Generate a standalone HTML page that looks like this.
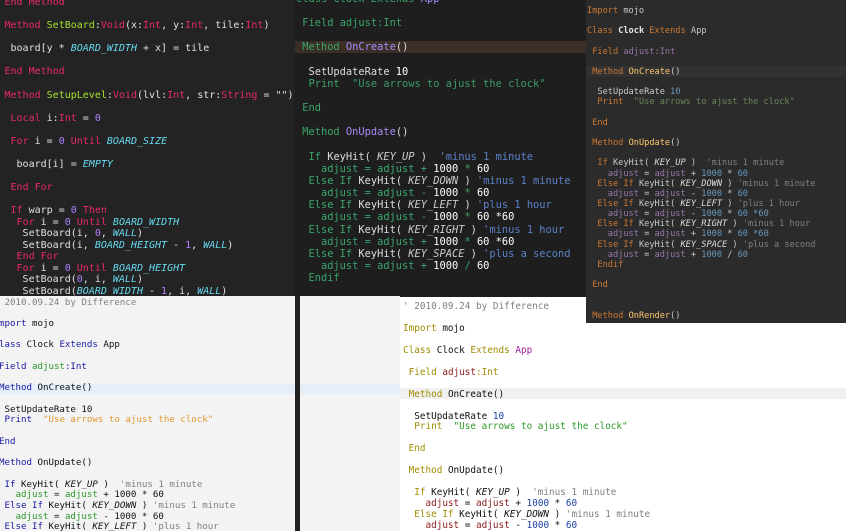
<!DOCTYPE html>
<html><head><meta charset="utf-8"><style>
*{margin:0;padding:0;box-sizing:border-box}
body{width:846px;height:531px;overflow:hidden;position:relative;background:#1e1e1e}
.p{position:absolute;overflow:hidden}
pre{position:absolute;font-family:"DejaVu Sans Mono","Liberation Mono",monospace;white-space:pre}
i{font-style:italic}
#A{left:0;top:0;width:295px;height:296px;background:#232323}
#A pre{left:4.5px;top:-2.8px;font-size:10px;line-height:11.55px;color:#e0e0e0}
#A .k{color:#e8286b}#A .f{color:#a6e22e}#A .c{color:#66d9ef;font-style:italic}#A .n{color:#ae81ff}
#B{left:295px;top:0;width:295px;height:296px;background:#1e1e1e}
#B pre{left:1px;top:-7.4px;font-size:10.37px;line-height:12.15px;color:#ddd}
#B .k{color:#3aa56a}#B .v{color:#3aa56a}#B .f{color:#a78bfa}#B .s{color:#3a9a6a}#B .c{color:#5b82c9}#B .n{color:#fff}#B .o{color:#3aa56a}#B .i{color:#ccc;font-style:italic}
#C{left:586px;top:0;width:260px;height:323px;background:#2b2b2b}
#C pre{left:1px;top:6px;font-size:8.65px;line-height:10.15px;color:#c8c8c8}
#C .k{color:#cc7832}#C .b{color:#e6e6e6;font-weight:bold}#C .v{color:#9876aa}#C .f{color:#ffc66d}#C .s{color:#6a8759}#C .c{color:#808080}#C .n{color:#6897bb}#C .i{font-style:italic;color:#ddd}
#D{left:0;top:296px;width:400px;height:235px;background:#f3f3f3}
#D pre{left:-6.5px;top:1.6px;font-size:9.14px;line-height:10.7px;color:#111}
#D .k{color:#1a1aa6}#D .v{color:#2a9a2a}#D .s{color:#e09a30}#D .c{color:#808080}#D .i{font-style:italic}
#E{left:400px;top:297px;width:446px;height:234px;background:#fff}
#E pre{left:3px;top:5px;font-size:9.33px;line-height:10.95px;color:#111}
#E .k{color:#a08c00}#E .a{color:#a0209f}#E .v{color:#8b1a1a}#E .s{color:#2a9a2a}#E .c{color:#808080}#E .n{color:#1a3fa0}#E .i{font-style:italic}
</style></head><body>

<div class="p" id="A"><pre><span class="k">End Method</span>

<span class="k">Method</span> <span class="f">SetBoard</span>:<span class="k">Void</span>(x:<span class="k">Int</span>, y:<span class="k">Int</span>, tile:<span class="k">Int</span>)

 board[y * <span class="c">BOARD_WIDTH</span> + x] = tile

<span class="k">End Method</span>

<span class="k">Method</span> <span class="f">SetupLevel</span>:<span class="k">Void</span>(lvl:<span class="k">Int</span>, str:<span class="k">String</span> = "")

 <span class="k">Local</span> i:<span class="k">Int</span> = <span class="n">0</span>

 <span class="k">For</span> i = <span class="n">0</span> <span class="k">Until</span> <span class="c">BOARD_SIZE</span>

  board[i] = <span class="c">EMPTY</span>

 <span class="k">End For</span>

 <span class="k">If</span> warp = <span class="n">0</span> <span class="k">Then</span>
  <span class="k">For</span> i = <span class="n">0</span> <span class="k">Until</span> <span class="c">BOARD_WIDTH</span>
   SetBoard(i, <span class="n">0</span>, <span class="c">WALL</span>)
   SetBoard(i, <span class="c">BOARD_HEIGHT</span> - <span class="n">1</span>, <span class="c">WALL</span>)
  <span class="k">End For</span>
  <span class="k">For</span> i = <span class="n">0</span> <span class="k">Until</span> <span class="c">BOARD_HEIGHT</span>
   SetBoard(<span class="n">0</span>, i, <span class="c">WALL</span>)
   SetBoard(<span class="c">BOARD_WIDTH</span> - <span class="n">1</span>, i, <span class="c">WALL</span>)</pre></div>

<div class="p" id="B"><div style="position:absolute;left:0;top:41px;width:295px;height:12px;background:#3b2e26"></div><pre><span class="k">Class</span> <span class="k">Clock</span> <span class="k">Extends</span> <span class="f">App</span>

 <span class="k">Field</span> <span class="v">adjust:Int</span>

 <span class="k">Method</span> <span class="f">OnCreate</span>()

  SetUpdateRate <span class="n">10</span>
  <span class="k">Print</span>  <span class="s">"Use arrows to ajust the clock"</span>

 <span class="k">End</span>

 <span class="k">Method</span> <span class="f">OnUpdate</span>()

  <span class="k">If</span> KeyHit( <span class="i">KEY_UP</span> )  <span class="c">'minus 1 minute</span>
    <span class="v">adjust = adjust +</span> <span class="n">1000</span> <span class="o">*</span> <span class="n">60</span>
  <span class="k">Else If</span> KeyHit( <span class="i">KEY_DOWN</span> ) <span class="c">'minus 1 minute</span>
    <span class="v">adjust = adjust -</span> <span class="n">1000</span> <span class="o">*</span> <span class="n">60</span>
  <span class="k">Else If</span> KeyHit( <span class="i">KEY_LEFT</span> ) <span class="c">'plus 1 hour</span>
    <span class="v">adjust = adjust -</span> <span class="n">1000</span> <span class="o">*</span> <span class="n">60 *60</span>
  <span class="k">Else If</span> KeyHit( <span class="i">KEY_RIGHT</span> ) <span class="c">'minus 1 hour</span>
    <span class="v">adjust = adjust +</span> <span class="n">1000</span> <span class="o">*</span> <span class="n">60 *60</span>
  <span class="k">Else If</span> KeyHit( <span class="i">KEY_SPACE</span> ) <span class="c">'plus a second</span>
    <span class="v">adjust = adjust +</span> <span class="n">1000</span> <span class="o">/</span> <span class="n">60</span>
  <span class="k">Endif</span></pre></div>

<div class="p" id="D"><div style="position:absolute;left:0;top:88px;width:400px;height:10px;background:#e6eef9"></div><div style="position:absolute;left:295px;top:0;width:5px;height:235px;background:#222"></div><pre><span class="c">' 2010.09.24 by Difference</span>

<span class="k">Import</span> mojo

<span class="k">Class</span> Clock <span class="k">Extends</span> App

 <span class="k">Field</span> <span class="v">adjust</span><span class="k">:Int</span>

 <span class="k">Method</span> OnCreate()

  SetUpdateRate 10
  <span class="k">Print</span>  <span class="s">"Use arrows to ajust the clock"</span>

 <span class="k">End</span>

 <span class="k">Method</span> OnUpdate()

  <span class="k">If</span> KeyHit( <span class="i">KEY_UP</span> )  <span class="c">'minus 1 minute</span>
    <span class="v">adjust</span> = <span class="v">adjust</span> + 1000 * 60
  <span class="k">Else If</span> KeyHit( <span class="i">KEY_DOWN</span> ) <span class="c">'minus 1 minute</span>
    <span class="v">adjust</span> = <span class="v">adjust</span> - 1000 * 60
  <span class="k">Else If</span> KeyHit( <span class="i">KEY_LEFT</span> ) <span class="c">'plus 1 hour</span></pre></div>

<div class="p" id="E"><div style="position:absolute;left:0;top:91px;width:446px;height:11px;background:#f0f0f0"></div><pre><span class="c">' 2010.09.24 by Difference</span>

<span class="k">Import</span> mojo

<span class="k">Class</span> Clock <span class="k">Extends</span> <span class="a">App</span>

 <span class="k">Field</span> <span class="v">adjust</span><span class="k">:Int</span>

 <span class="k">Method</span> OnCreate()

  SetUpdateRate <span class="n">10</span>
  <span class="k">Print</span>  <span class="s">"Use arrows to ajust the clock"</span>

 <span class="k">End</span>

 <span class="k">Method</span> OnUpdate()

  <span class="k">If</span> KeyHit( <span class="i">KEY_UP</span> )  <span class="c">'minus 1 minute</span>
    <span class="v">adjust</span> = <span class="v">adjust</span> + <span class="n">1000</span> * <span class="n">60</span>
  <span class="k">Else If</span> KeyHit( <span class="i">KEY_DOWN</span> ) <span class="c">'minus 1 minute</span>
    <span class="v">adjust</span> = <span class="v">adjust</span> - <span class="n">1000</span> * <span class="n">60</span></pre></div>

<div class="p" id="C"><div style="position:absolute;left:0;top:66px;width:260px;height:11px;background:#323232"></div><pre><span class="k">Import</span> mojo

<span class="k">Class</span> <span class="b">Clock</span> <span class="k">Extends</span> App

 <span class="k">Field</span> <span class="v">adjust:Int</span>

 <span class="k">Method</span> <span class="f">OnCreate</span>()

  SetUpdateRate <span class="n">10</span>
  <span class="k">Print</span>  <span class="s">"Use arrows to ajust the clock"</span>

 <span class="k">End</span>

 <span class="k">Method</span> <span class="f">OnUpdate</span>()

  <span class="k">If</span> KeyHit( <span class="i">KEY_UP</span> )  <span class="c">'minus 1 minute</span>
    <span class="v">adjust</span> = <span class="v">adjust</span> + <span class="n">1000</span> * <span class="n">60</span>
  <span class="k">Else If</span> KeyHit( <span class="i">KEY_DOWN</span> ) <span class="c">'minus 1 minute</span>
    <span class="v">adjust</span> = <span class="v">adjust</span> - <span class="n">1000</span> * <span class="n">60</span>
  <span class="k">Else If</span> KeyHit( <span class="i">KEY_LEFT</span> ) <span class="c">'plus 1 hour</span>
    <span class="v">adjust</span> = <span class="v">adjust</span> - <span class="n">1000</span> * <span class="n">60 *60</span>
  <span class="k">Else If</span> KeyHit( <span class="i">KEY_RIGHT</span> ) <span class="c">'minus 1 hour</span>
    <span class="v">adjust</span> = <span class="v">adjust</span> + <span class="n">1000</span> * <span class="n">60 *60</span>
  <span class="k">Else If</span> KeyHit( <span class="i">KEY_SPACE</span> ) <span class="c">'plus a second</span>
    <span class="v">adjust</span> = <span class="v">adjust</span> + <span class="n">1000</span> / <span class="n">60</span>
  <span class="k">Endif</span>

 <span class="k">End</span>


 <span class="k">Method</span> <span class="f">OnRender</span>()</pre></div>

</body></html>
